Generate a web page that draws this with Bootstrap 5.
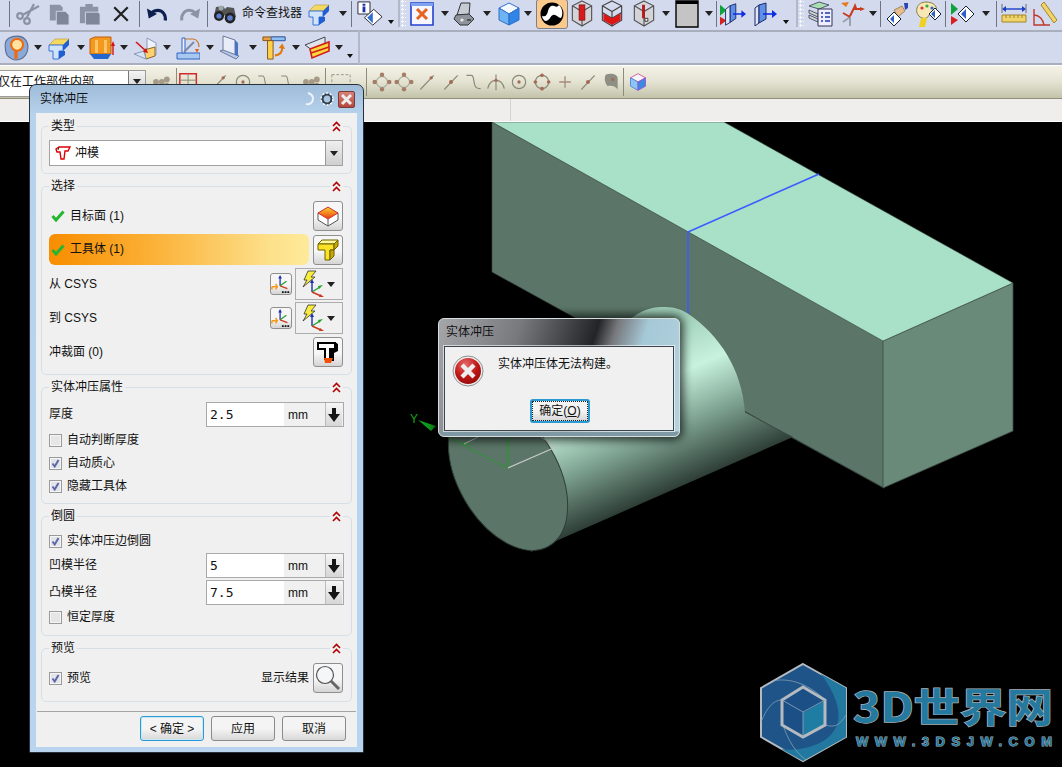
<!DOCTYPE html>
<html lang="zh-CN">
<head>
    <meta charset="UTF-8">
    <meta name="viewport" content="width=device-width, initial-scale=1.0">
    <title>实体冲压</title>
    <link href="https://cdn.jsdelivr.net/npm/bootstrap@5.3.0/dist/css/bootstrap.min.css" rel="stylesheet">
    <style>
        html, body { margin: 0; background: #000; overflow: hidden; }
        body { font-family: "Liberation Sans", "Noto Sans CJK SC", sans-serif; font-size: 12px; color: #111; line-height: 1.2; }
        .nx-app { width: 1062px; height: 767px; }
        .nx-bar { background: #d3daed; border-bottom: 2px solid #a9aebd; flex: none; }
        .nx-bar1 { height: 32px; padding-bottom: 3px; }
        .nx-bar2 { height: 33px; padding-left: 1px; padding-bottom: 2px; }
        .nx-bar3 { height: 34px; background: linear-gradient(#f4f2e6, #e4e3d2 50%, #c3c3ab); border-bottom: 1px solid #8f8f7c; border-top: 1px solid #fff; flex: none; }
        .nx-bar4 { height: 23px; background: #f0eeec; border-bottom: 1px solid #fff; flex: none; }
        .nx-tb1 { width: 400px; border-right: 2px solid #b3b8c6; }
        .nx-tb2 { width: 398px; border-right: 2px solid #b3b8c6; }
        .nx-tb4 { width: 359px; border-right: 2px solid #b3b8c6; height: 33px; margin-bottom: -2px; }
        .nx-cell { flex: none; display: flex; align-items: center; justify-content: center; height: 100%; }
        .nx-cell svg { flex: none; }
        .w6 { width: 6px; } .w10 { width: 10px; } .w12 { width: 12px; } .w13 { width: 13px; } .w14 { width: 14px; } .w16 { width: 16px; }
        .w20 { width: 20px; } .w22 { width: 22px; } .w24 { width: 24px; } .w26 { width: 26px; } .w28 { width: 28px; } .w30 { width: 30px; }
        .w32 { width: 32px; } .w34 { width: 34px; } .w36 { width: 36px; }
        .nx-ml1 { margin-left: 1px; } .nx-ml2 { margin-left: 2px; } .nx-mr3 { margin-right: 3px; }
        .nx-caret { width: 0; height: 0; border: 4.5px solid transparent; border-top: 5px solid #222; border-bottom: 0; }
        .nx-caret-sm { width: 0; height: 0; border: 3.5px solid transparent; border-top: 4px solid #111; border-bottom: 0; margin-top: 16px; }
        .nx-sep { width: 1px; height: 26px; background: #6f7480; flex: none; }
        .nx-sep-b { width: 1px; height: 28px; background: #8c8c7a; flex: none; }
        .nx-grip { width: 6px; height: 100%; flex: none; background: radial-gradient(circle at 1.5px 1.5px, #f7f8fc 1px, transparent 1.4px) 1px 0 / 4px 4px; }
        .nx-on { width: 32px; height: 30px; background: #fbc98c; border: 1px solid #7d8088; border-radius: 3px; display: flex; align-items: center; justify-content: center; }
        .nx-find { width: 60px; flex: none; white-space: nowrap; }
        .nx-combo { width: 146px; height: 27px; margin-top: 4px; background: #fff; border: 1px solid #9b9b9b; border-left: 0; flex: none; overflow: hidden; font-size: 12px; }
        .nx-combo-t { margin-left: -2px; padding-top: 4px; white-space: nowrap; flex: 1; overflow: hidden; }
        .nx-combo-b { width: 17px; height: 100%; padding-top: 8px; border-left: 1px solid #777; background: linear-gradient(#f4f4f4, #c8c8c8); }
        .nx-rule { width: 1px; height: 100%; background: #d4d2d0; margin-left: 510px; }
        .nx-view { flex: 1; background: #000; }
        .nx-view svg { display: block; }

        .nx-win { left: 29px; top: 84px; width: 335px; height: 669px; background: linear-gradient(#9fbcd9, #b7d2ec 30px, #b9d4ee); border: 1px solid #26303a; border-radius: 7px 7px 1px 1px; padding: 0 6px 5px; }
        .nx-win-t { height: 28px; padding: 0 2px 0 4px; font-size: 12px; }
        .nx-x { width: 17px; height: 17px; background: linear-gradient(#d98278, #b5483f); border: 1px solid #7a3a36; border-radius: 2px; margin-left: 3px; }
        .nx-panel { background: #f0f0f0; height: 634px; padding: 13px 5px 0; }
        .nx-grp { border: 1px solid #d6dfe6; border-radius: 5px; padding: 0 8px 0 7px; }
        .nx-grp + .nx-grp { margin-top: 12px; }
        .nx-g-h { height: 17px; margin-top: -9px; padding-bottom: 1px; }
        .nx-g-l { background: #f0f0f0; padding: 0 2px; }
        .nx-g-c { background: #f0f0f0; padding: 0 2px; display: flex; }
        .nx-sel { height: 26px; background: #fff; border: 1px solid #a2a2a2; padding-left: 5px; margin-top: 5px; margin-bottom: 7px; }
        .nx-sel-b { width: 17px; height: 100%; border-left: 1px solid #999; background: linear-gradient(#efefef, #cfcfcf); margin-left: auto; }
        .nx-row { display: flex; align-items: center; }
        .nx-pt6 { margin-top: 6px; }
        .nx-h30 { height: 30px; }
        .nx-h31 { height: 31px; margin-top: 3px; }
        .nx-h32 { height: 32px; margin-top: 3px; }
        .nx-h32b { height: 32px; margin-top: 2px; }
        .nx-h30b { height: 30px; margin-top: 3px; margin-bottom: 7px; }
        .nx-fill { flex: 1; padding-left: 2px; gap: 5px; height: 100%; }
        .nx-hot { background: linear-gradient(90deg, #f88d00, #fbb137 40%, #fde08b 85%, #feea99); border-radius: 6px; margin-right: 4px; }
        .nx-ibtn { width: 30px; height: 30px; flex: none; background: linear-gradient(#f6f6f6 55%, #d4d4d4); border: 1px solid #8f8f8f; border-radius: 3px; display: flex; align-items: center; justify-content: center; padding: 0; }
        .nx-sbtn { width: 22px; height: 22px; margin-right: 3px; flex: none; background: linear-gradient(#f6f6f6 55%, #d4d4d4); border: 1px solid #8f8f8f; border-radius: 3px; display: flex; align-items: center; justify-content: center; }
        .nx-ddn { width: 48px; height: 32px; flex: none; background: #f0f0f0; border: 1px solid #acacac; padding-left: 3px; padding-right: 7px; justify-content: space-between; }
        .nx-inp.input-group { width: 138px; height: 25px; flex: none; flex-wrap: nowrap; margin-left: auto; margin-right: -1px; border: 1px solid #a9a9a9; }
        .nx-inp .form-control { flex: none; width: 77px; padding: 0 0 0 3px; border: 0; border-radius: 0; font: 13px/23px "DejaVu Sans Mono", "Liberation Mono", monospace; color: #111; background: #fff; }
        .nx-inp .input-group-text { flex: none; width: 42px; padding: 0 0 0 4px; margin: 0 !important; border: 0; border-radius: 0; background: #f0f0f0; font-size: 12px; color: #111; }
        .nx-inp .nx-spin { width: 17px; border-left: 1px solid #bbb; background: linear-gradient(#f6f6f6, #d6d6d6); }
        .nx-chk { height: 23px; gap: 5px; }
        .nx-chk .form-check-input { width: 13px; height: 13px; margin: 0; flex: none; border: 1px solid #9a9a9a; border-radius: 0; background-color: #e6e6e6; box-shadow: inset 0 0 0 1px #f5f5f5; }
        .nx-chk .form-check-input:checked { background-color: #e3e4ea; border-color: #9a9a9a; background-image: url("data:image/svg+xml,%3csvg xmlns='http://www.w3.org/2000/svg' viewBox='0 0 13 13'%3e%3cpath fill='none' stroke='%235d68a8' stroke-width='2' d='M3.5 6.5l2.2 3L9.5 3'/%3e%3c/svg%3e"); background-size: 13px 13px; }
        .nx-mt1 { margin-top: 1px; } .nx-mt2 { margin-top: 2px; }
        .nx-pb5 { margin-bottom: 5px; } .nx-pb6 { margin-bottom: 6px; } .nx-pt5 { margin-top: 5px; }
        .nx-pt8 { margin-bottom: 8px; }
        .nx-foot { margin: 9px -4px 0 -4px; border-top: 1px solid #a5a5a5; padding: 4px 10px 0 0; gap: 7px; }
        .nx-btn.btn { width: 64px; height: 25px; padding: 0; font-size: 12px; line-height: 1; color: #111; background: linear-gradient(#f4f4f4 50%, #d8d8d8); border: 1px solid #8a8a8a; border-radius: 3px; }
        .nx-btn.nx-def { border-color: #2a9ad2; box-shadow: inset 0 0 0 1px #c9e9f8; }

        .nx-msg { left: 438px; top: 318px; width: 242px; height: 119px; padding: 27px 5px 5px; border: 1px solid #d8dde0; border-radius: 6px;
            background: linear-gradient(#0000 22px, #0000 112px, #7f99a4 113px), linear-gradient(108deg, #a5a6aa 0, #77797d 30%, #232428 58%, #77797d 65%, #a6c9d7 76%, #b3d3df 100%);
            box-shadow: 0 0 10px 3px rgba(0, 0, 0, .75); }
        .nx-msg-t { position: absolute; left: 7px; top: 6px; font-size: 12px; }
        .nx-msg-b { height: 85px; background: #f0f0f0; border: 1px solid #39444c; box-shadow: 0 0 0 1px rgba(255,255,255,.6); padding: 8px 8px 0 7px; }
        .nx-msg-s { gap: 14px; height: 44px; }
        .nx-msg-s span { margin-top: 2px; }
        .nx-msg .btn { width: 60px; height: 24px; margin-left: 78px; padding: 0; font-size: 12px; color: #111; background: linear-gradient(#f4f4f4 50%, #d6d6d6); border: 2px solid #2a9ad2; border-radius: 3px; outline: 1px dotted #222; outline-offset: -3px; }
        .nx-logo1 { font-family: "Noto Sans CJK SC", "Liberation Sans", sans-serif; font-weight: 700; font-size: 40px; fill: #25799f; stroke: #aab2b6; stroke-width: 1.4; paint-order: stroke; }
        .nx-logo2 { font-family: "Liberation Sans", sans-serif; font-weight: 700; font-size: 13px; fill: #25799f; stroke: #aab2b6; stroke-width: 1; paint-order: stroke; }
    </style>
</head>
<body>
    <svg width="0" height="0" class="position-absolute">
        <defs>
            <linearGradient id="cylShade" gradientUnits="userSpaceOnUse" x1="650" y1="330" x2="718" y2="486">
                <stop offset="0" stop-color="#9fcfb8"/><stop offset=".3" stop-color="#c8f2de"/><stop offset=".6" stop-color="#7b9f8e"/><stop offset=".92" stop-color="#2c3c34"/>
            </linearGradient>
            <radialGradient id="errRed" cx=".4" cy=".25" r=".85"><stop offset="0" stop-color="#e66a6a"/><stop offset=".55" stop-color="#c01616"/><stop offset="1" stop-color="#8c0a0a"/></radialGradient>
            <linearGradient id="orgTop" x1="0" y1="0" x2="0" y2="1"><stop offset="0" stop-color="#f8d530"/><stop offset="1" stop-color="#ee3a10"/></linearGradient>

            <symbol id="scissors" viewBox="0 0 24 24"><g fill="none" stroke="#8b92a4" stroke-width="2.2"><circle cx="4" cy="14" r="2.8"/><circle cx="11" cy="19" r="2.8"/><path d="M6.5 13 23 4M10.5 16 18 2"/></g></symbol>
            <symbol id="copy" viewBox="0 0 24 24"><path fill="#8c93a6" d="M2 2h11l3 3v14H2z"/><path fill="#7f8699" stroke="#d3daed" d="M9 9h10l4 4v11H9z"/></symbol>
            <symbol id="paste" viewBox="0 0 24 24"><path fill="#8c93a6" d="M1 4h6V1h8v3h6v18H1z"/><path fill="#7f8699" stroke="#d3daed" d="M7 10h14l2 2v12H7z"/></symbol>
            <symbol id="cross" viewBox="0 0 24 24"><path stroke="#222" stroke-width="3" d="M3 3 21 21M21 3 3 21"/></symbol>
            <symbol id="undo" viewBox="0 0 24 24"><path fill="none" stroke="#0d1f4f" stroke-width="3.4" d="M21 19c1-6-3-11-8-11-3 0-5 1-7 3"/><path fill="#0d1f4f" d="M1 6l2 11 9-5z"/></symbol>
            <symbol id="redo" viewBox="0 0 24 24"><path fill="none" stroke="#8c93a6" stroke-width="3.2" d="M3 19c-1-6 3-11 8-11 3 0 5 1 7 3"/><path fill="#8c93a6" d="M23 6l-2 11-9-5z"/></symbol>
            <symbol id="binoc" viewBox="0 0 24 24"><path fill="#555" d="M3 5l7-1 2 3 2-2 7 1 2 9-8 2-3-4-4 4-7-3z"/><circle cx="6" cy="14" r="5" fill="#222"/><circle cx="6" cy="14" r="2.6" fill="#5c7ed0"/><circle cx="17" cy="16" r="5.4" fill="#222"/><circle cx="17" cy="16" r="2.8" fill="#5c7ed0"/><circle cx="8" cy="6" r="2.5" fill="#9aa"/></symbol>
            <symbol id="tee" viewBox="0 0 24 24"><path fill="#f5d860" stroke="#b89a30" stroke-width=".6" d="M2 9l6-6h14l-6 6z"/><path fill="#cfe3fb" stroke="#3a73d6" d="M2 9h14v6h-4v8H6v-8H2z"/><path fill="#1f5fd0" d="M16 9l6-6v6l-6 6zM12 15h6v4l-6 4z"/></symbol>
            <symbol id="info" viewBox="0 0 28 28"><path fill="#fff" stroke="#223" d="M1 1h13v13H1z"/><path fill="#1a2ea8" d="M6 3h3v2H6zM6 6h3v6H6z"/><path fill="#fff" stroke="#223" d="M8 18 18 9l9 8-10 9z"/><path fill="#2f6ed2" d="M11 18l6-6v12z"/></symbol>
            <symbol id="framex" viewBox="0 0 24 24"><path fill="#f6f6ff" stroke="#2441d0" stroke-width="1.6" d="M1 1h22v22H1z"/><path fill="#7ea2ee" d="M1 1h22v3H1z"/><path stroke="#e8631c" stroke-width="3" d="M7 7l10 10M17 7 7 17"/></symbol>
            <symbol id="printer" viewBox="0 0 24 24"><path fill="#c7cbd4" stroke="#333" d="M9 1h9l-1 12H5z"/><path fill="#8f939c" stroke="#333" d="M4 13l13-1 5 5-6 6H8l-6-6z"/><circle cx="10" cy="18" r="1.6" fill="#eee"/><path stroke="#111" d="M15 18h4"/></symbol>
            <symbol id="cube" viewBox="0 0 24 24"><path fill="#f4f8ff" stroke="#2d6fca" d="M12 1l10 5-10 6L2 6z"/><path fill="#6eb4f2" stroke="#2d6fca" d="M2 6l10 6v11L2 18z"/><path fill="#2f86e6" stroke="#2d6fca" d="M22 6l-10 6v11l10-5z"/></symbol>
            <symbol id="yin" viewBox="0 0 24 24"><circle cx="12" cy="12" r="11.5" fill="#000"/><path fill="#fff" d="M19 3c4 4 4 10 2 13-3 0-5-4-8-3s-3 6-8 6c-1-1-3-3-3-5 4 1 5-1 6-5s3-6 6-5 3 1 4 0c1-1 1-1 1-1z"/></symbol>
            <symbol id="wire" viewBox="0 0 24 28"><path fill="#d3d3d8" stroke="#555" stroke-width="1.2" d="M12 1l10 5v15l-10 6-10-6V6zM2 6l10 6 10-6M12 12v15"/></symbol>
            <symbol id="box1" viewBox="0 0 24 28"><use href="#wire"/><path fill="#d81c1c" stroke="#600" stroke-width=".6" d="M9 5h6v16H9z"/></symbol>
            <symbol id="box2" viewBox="0 0 24 28"><path fill="#dde" fill-opacity=".4" stroke="#444" stroke-width="1.2" d="M12 1l10 5v15l-10 6-10-6V6zM2 6l10 6 10-6M12 12v15M2 13l10 6 10-6"/><path fill="#dd1616" d="M3 14l9 5 9-5 0 7-9 5-9-5z"/></symbol>
            <symbol id="box3" viewBox="0 0 24 28"><use href="#wire"/><path fill="#b81818" d="M10 5h3v14h-3z"/><path fill="#fff" stroke="#333" d="M13 19h3v3h-3z"/></symbol>
            <symbol id="sq" viewBox="0 0 24 28"><path fill="#c4c4c4" stroke="#000" stroke-width="1.4" d="M1 1h22v26H1z"/><path fill="#000" d="M1 1h22v3H1z"/></symbol>
            <symbol id="flowa" viewBox="0 0 28 24"><path fill="#0da33c" d="M0 2l7 6-7 6z"/><path fill="#d72020" d="M0 15l7 4-7 5z"/><path fill="#dfe7fb" stroke="#1c2a66" d="M6 7l5-4v18l-5 3z"/><path fill="#5f8fe8" stroke="#1c2a66" d="M11 3l6-2v16l-6 4z"/><path stroke="#0b2ee0" stroke-width="1.6" d="M14 12h10"/><path fill="#0b2ee0" d="M23 8l5 4-5 4z"/></symbol>
            <symbol id="flowb" viewBox="0 0 24 24"><path fill="#dfe7fb" stroke="#1c2a66" d="M1 6l4-3v18l-4 3z"/><path fill="#5f8fe8" stroke="#1c2a66" d="M5 3l7-2v16l-7 4z"/><path stroke="#0b2ee0" stroke-width="1.6" d="M9 12h10"/><path fill="#0b2ee0" d="M18 8l5 4-5 4z"/></symbol>
            <symbol id="layers" viewBox="0 0 26 26"><path fill="#a8e0b0" stroke="#557" d="M1 5l10-4 10 3-10 4z"/><path fill="#cfd8c8" stroke="#557" d="M1 9l9 4v3l-9-4zM1 14l9 4v3l-9-4z"/><path fill="#eef" stroke="#335" d="M10 8h14v17H10z"/><path stroke="#1a3caa" stroke-width="1.4" d="M13 12h2m2 0h5M13 16h2m2 0h5M13 20h2m2 0h5"/></symbol>
            <symbol id="axes" viewBox="0 0 26 26"><path stroke="#9ba0aa" stroke-width="2" fill="none" d="M11 16v9M11 16l-7 5"/><path stroke="#c93a1e" stroke-width="2" fill="none" d="M11 15 15 7M14 8h10M11 16 4 12"/><path fill="#e8781e" d="M2 2l8-1-3 5z"/><path fill="#c93a1e" d="M16 2l2 5-4 0zM21 6l5 2-5 2z"/></symbol>
            <symbol id="hand" viewBox="0 0 24 24"><path fill="#e8bd8c" stroke="#7a5a30" stroke-width=".6" d="M8 8l8-4 3 5-7 6z"/><path fill="#2a46b0" d="M18 1h4v5l-3 2z"/><path fill="#fff" stroke="#123" d="M1 17l7-7 7 7-7 7z"/><path fill="#2e60c8" d="M4 17l4-4v8z"/></symbol>
            <symbol id="palette" viewBox="0 0 26 26"><path fill="#f6e7b6" stroke="#8d7a3c" d="M11 1c7 0 12 4 10 9-2 4-6 2-7 4-1 3-4 4-7 3C2 15 1 10 2 7c1-4 5-6 9-6z"/><circle cx="7" cy="7" r="1.6" fill="#d33"/><circle cx="12" cy="5" r="1.6" fill="#3a3"/><circle cx="17" cy="7" r="1.6" fill="#36c"/><path fill="#f0d020" d="M6 17h6l-2 9H4z"/><path fill="#fff" stroke="#123" d="M14 13l6-6 6 6-6 6z"/><path fill="#2e60c8" d="M16 13l4-4v8z"/></symbol>
            <symbol id="flowd" viewBox="0 0 26 24"><path fill="#0da33c" d="M1 1l7 6-7 6z"/><path fill="#d72020" d="M1 14l7 4-7 5z"/><path fill="#fff" stroke="#123" d="M8 12l8-8 8 8-8 8z"/><path fill="#2e60c8" d="M11 12l5-5v10z"/></symbol>
            <symbol id="ruler" viewBox="0 0 26 24"><path stroke="#1a3ec8" stroke-width="1.4" d="M3 7h20"/><path fill="#1a3ec8" d="M1 7l4-3v6zM25 7l-4-3v6z"/><path stroke="#667" d="M1 2v9M25 2v9"/><path fill="#f0d46a" stroke="#a3852a" d="M1 13h24v7H1z"/><path stroke="#a3852a" d="M5 13v3M9 13v3M13 13v3M17 13v3M21 13v3"/></symbol>
            <symbol id="protr" viewBox="0 0 26 26"><path fill="none" stroke="#c0392b" stroke-width="1.4" d="M2 8v16h16M2 14c5 0 9 4 10 10"/><path fill="#f0d46a" stroke="#a3852a" d="M9 4l3-3 13 18-3 3z"/></symbol>

            <symbol id="gasket" viewBox="0 0 24 24"><path fill="#89a9d8" stroke="#5c6d90" d="M2 9c0-6 6-8 11-8 6 0 10 4 10 10 0 7-5 12-11 12-3 0-5-1-8-4-2-3-2-6-2-10z"/><circle cx="13" cy="9" r="5.5" fill="#ffe2a0" stroke="#ef6a10" stroke-width="2"/><path stroke="#ef6a10" stroke-width="3" d="M12 14v8"/></symbol>
            <symbol id="prism" viewBox="0 0 26 24"><path fill="#f39a1c" stroke="#c25a10" d="M1 3l5-2h16v17H1z"/><path fill="#ffc46a" d="M6 4h3v13H6zM15 4h3v13h-3z"/><path fill="#2468cf" d="M1 18h21l-3 5H5z"/><path stroke="#d41414" stroke-width="1.4" d="M24 19V9"/><path fill="#d41414" d="M24 5l2 5h-4z"/></symbol>
            <symbol id="cone" viewBox="0 0 24 24"><path fill="#eef3fb" stroke="#8899bb" d="M14 2l9 5v12l-9 3z"/><path fill="#ffcf70" stroke="#8a6a20" d="M11 14l11-3 0 9-9 3z"/><path fill="#d6e4f6" stroke="#8899bb" d="M1 18l10-3 2 8z"/><path stroke="#d01515" stroke-width="1.6" d="M3 6l10 9"/><path fill="#d01515" d="M15 17l-5-1 3-4z"/></symbol>
            <symbol id="weld" viewBox="0 0 24 24"><path fill="#a9c8ef" stroke="#2f64c4" d="M1 17h23v6H1z"/><path fill="#eef" stroke="#2f64c4" d="M9 2v15H6V2z"/><path fill="none" stroke="#c2762a" stroke-width="1.2" d="M9 3h8c4 0 6 4 6 8"/><path stroke="#7a8aa8" stroke-width="2" d="M8 16 18 6"/><path fill="#e5621a" d="M19 13h4l-2 4z"/></symbol>
            <symbol id="sheet" viewBox="0 0 24 26"><path fill="#e8edf7" stroke="#6a7a9a" d="M4 1l12 4v15l-12-4z"/><path fill="#b8c8e8" stroke="#6a7a9a" d="M1 16l3-1 16 6-3 3z"/><path fill="#4a74c4" d="M16 5l3 3v13l-3-1z"/></symbol>
            <symbol id="teearrow" viewBox="0 0 26 26"><path fill="#e9a23a" stroke="#805018" d="M1 1h24v4H1z"/><path fill="#8fc0ee" stroke="#2a62c2" d="M10 1h15v4H10z"/><path fill="#ffd24a" stroke="#805018" d="M6 5h6v20H6z"/><path fill="none" stroke="#e07a10" stroke-width="2.2" d="M14 21c5 0 8-3 8-9"/><path fill="#e07a10" d="M18 13l4-5 3 6z"/></symbol>
            <symbol id="stripe" viewBox="0 0 26 24"><path fill="#dfe3ea" stroke="#445" d="M1 9l20-8v7L8 14z"/><path fill="#f7d83c" stroke="#d51c1c" stroke-width="1.6" d="M6 13l19-7v9L8 22z"/><path stroke="#d51c1c" stroke-width="1.6" d="M7 17l18-6"/></symbol>

            <symbol id="redbox" viewBox="0 0 24 24"><path fill="none" stroke="#d52828" stroke-width="1.6" d="M2 3h18v14H2z"/><path stroke="#886" d="M11 3v14M2 10h18"/></symbol>
            <symbol id="dots" viewBox="0 0 24 24"><g fill="#a59a86"><circle cx="6" cy="12" r="3.5"/><circle cx="13" cy="12" r="3.5"/><circle cx="19" cy="9" r="3.5"/><circle cx="19" cy="16" r="3"/></g></symbol>
            <symbol id="dash" viewBox="0 0 24 24"><path fill="none" stroke="#9a8f80" stroke-dasharray="3 2" d="M2 4h20v14H2z"/></symbol>
            <symbol id="snap" viewBox="0 0 24 24"><circle cx="12" cy="12" r="6" fill="none" stroke="#8b9180"/><g fill="#a57c66"><circle cx="12" cy="4" r="2.4"/><circle cx="12" cy="20" r="2.4"/><circle cx="4" cy="12" r="2.4"/><circle cx="20" cy="12" r="2.4"/></g></symbol>
            <symbol id="line" viewBox="0 0 24 24"><path stroke="#8b8a78" stroke-width="1.4" d="M4 21 20 4"/><circle cx="17" cy="7" r="2" fill="#a46a55"/></symbol>
            <symbol id="mid" viewBox="0 0 24 24"><path stroke="#8b8a78" stroke-width="1.4" d="M4 21 20 4"/><circle cx="12" cy="12" r="2.4" fill="#a46a55"/></symbol>
            <symbol id="curve" viewBox="0 0 24 24"><path fill="none" stroke="#8b8a78" stroke-width="1.4" d="M3 4h6c3 0 2 6 4 12 1 3 3 4 7 4"/></symbol>
            <symbol id="cross3" viewBox="0 0 24 24"><path fill="none" stroke="#8b8a78" stroke-width="1.4" d="M12 3v19M2 20c2-9 7-10 10-10s8 1 10 10"/><circle cx="12" cy="10" r="2" fill="#a46a55"/></symbol>
            <symbol id="ring" viewBox="0 0 24 24"><circle cx="12" cy="12" r="8" fill="none" stroke="#8b8a78" stroke-width="1.4"/><circle cx="12" cy="12" r="2" fill="#a46a55"/></symbol>
            <symbol id="ring4" viewBox="0 0 24 24"><circle cx="12" cy="12" r="8" fill="none" stroke="#8b8a78" stroke-width="1.4"/><g fill="#a46a55"><circle cx="12" cy="4" r="2.2"/><circle cx="12" cy="20" r="2.2"/><circle cx="4" cy="12" r="2.2"/><circle cx="20" cy="12" r="2.2"/></g></symbol>
            <symbol id="plus" viewBox="0 0 24 24"><path stroke="#a68c7c" stroke-width="1.6" d="M12 5v14M5 12h14"/></symbol>
            <symbol id="face" viewBox="0 0 24 24"><path fill="#8d8f84" d="M6 3c7-2 13 0 14 4v14c-3-4-8-5-12-4-3-3-5-10-2-14z"/><circle cx="14" cy="9" r="2" fill="#a46a55"/></symbol>
            <symbol id="cubeb" viewBox="0 0 24 24"><path fill="#f4f4fb" stroke="#d64b8e" d="M12 2l9 5-9 5-9-5z"/><path fill="#8ec4f5" stroke="#4b80d6" d="M3 7l9 5v10l-9-5z"/><path fill="#3b8ae0" stroke="#a04bd6" d="M21 7l-9 5v10l9-5z"/></symbol>

            <symbol id="chev" viewBox="0 0 9 11"><path fill="none" stroke="#b30000" stroke-width="1.6" d="M1 5l3.5-3.5L8 5M1 10l3.5-3.5L8 10"/></symbol>
            <symbol id="ok" viewBox="0 0 14 12"><path fill="none" stroke="#25b52f" stroke-width="3" d="M1.5 6l3.5 4L12.5 1.5"/></symbol>
            <symbol id="punchr" viewBox="0 0 16 14"><path fill="#fff" stroke="#d00" stroke-width="1.4" d="M1 3l3-2h11l-2 4h-3l-1 8H6L5 6H2z"/><path stroke="#333" d="M4 1l-1 3"/></symbol>
            <symbol id="facebox" viewBox="0 0 22 22"><path fill="#fff" stroke="#555" d="M1 8v7l10 6 10-6V8z"/><path stroke="#555" d="M11 14v7"/><path fill="url(#orgTop)" stroke="#c33" d="M11 2l10 6-10 6L1 8z"/></symbol>
            <symbol id="teey" viewBox="0 0 22 24"><path fill="#fff79a" stroke="#6d6100" d="M1 6l4-4h16l-4 4z"/><path fill="#fbe227" stroke="#6d6100" d="M1 6h16v6h-4v10H8V12H1z"/><path fill="#c7a700" stroke="#6d6100" d="M17 6l4-4v6l-4 4zM13 12h4l-0 6-4 4z"/></symbol>
            <symbol id="csyss" viewBox="0 0 22 22"><path stroke="#1b2fa8" stroke-width="1.4" d="M10 13V3"/><path fill="#1b2fa8" d="M10 1l2 4H8z"/><path stroke="#23a12c" stroke-width="1.4" d="M10 13l7-5"/><path stroke="#c93a1e" stroke-width="1.4" d="M10 13l8 3"/><path fill="none" stroke="#f39a1c" stroke-width="1.6" d="M1 14h5M5 11l2 3-2 3M1 14v3"/><path stroke="#111" stroke-width="2" stroke-dasharray="2 1" d="M12 20h9"/></symbol>
            <symbol id="csysl" viewBox="0 0 26 28"><path fill="#f8ec3c" stroke="#333" stroke-width=".8" d="M9 1h8l-5 6h4L4 17l4-7H5z"/><path stroke="#1b2fa8" stroke-width="1.4" d="M13 22V11"/><path fill="#1b2fa8" d="M13 9l2 4h-4z"/><path stroke="#23a12c" stroke-width="1.4" d="M13 22l8-5"/><path fill="#23a12c" d="M24 15l-4 4-1-3z"/><path stroke="#c93a1e" stroke-width="1.4" d="M13 22l9 4"/><path fill="#c93a1e" d="M25 27l-5 0 1-3z"/></symbol>
            <symbol id="teeb" viewBox="0 0 22 24"><path fill="#fff" stroke="#000" stroke-width="2" d="M1 3h17v6h-5v10H8V9H1z"/><path fill="#000" d="M18 2l3 2v7l-4 2V9zM13 9h4v12l-4 0z"/><path fill="#f0500a" d="M7 18h9l-2 5H8z"/></symbol>
            <symbol id="lens" viewBox="0 0 26 26"><circle cx="10" cy="10" r="8.5" fill="#f4f6f8" stroke="#555" stroke-width="1.2"/><path stroke="#666" stroke-width="3" d="M16 16l8 8"/></symbol>
            <symbol id="spin" viewBox="0 0 12 14"><path fill="#151515" d="M4 0h4v6h4l-6 8-6-8h4z"/></symbol>
            <symbol id="err" viewBox="0 0 32 32"><circle cx="16" cy="16" r="15" fill="#eee" stroke="#8e8e8e"/><circle cx="16" cy="16" r="13" fill="url(#errRed)"/><path stroke="#eee" stroke-width="4.4" d="M10 10l12 12M22 10 10 22"/></symbol>
            <symbol id="refresh" viewBox="0 0 16 16"><path fill="none" stroke="#eef4fb" stroke-width="2" d="M9 2c4 1 5 4 5 6 0 4-4 6-7 5"/></symbol>
            <symbol id="gear" viewBox="0 0 16 16"><circle cx="8" cy="8" r="4.6" fill="none" stroke="#33414f" stroke-width="2.4"/><circle cx="8" cy="8" r="6" fill="none" stroke="#fff" stroke-width="1.4" stroke-dasharray="2 1.8"/></symbol>
            <symbol id="close" viewBox="0 0 15 15"><path stroke="#eee" stroke-width="3" d="M3 3l9 9M12 3l-9 9"/></symbol>
        </defs>
    </svg>

    <div class="nx-app d-flex flex-column position-relative">
        <!-- standard toolbars -->
        <div class="nx-bar nx-bar1 d-flex align-items-center">
            <div class="nx-tb1 d-flex align-items-center h-100">
                <div class="w10 d-flex justify-content-end nx-mr3"><span class="nx-sep"></span></div>
                <div class="nx-cell w30"><svg width="24" height="24"><use href="#scissors"/></svg></div>
                <div class="nx-cell w32"><svg width="22" height="22"><use href="#copy"/></svg></div>
                <div class="nx-cell w30"><svg width="22" height="22"><use href="#paste"/></svg></div>
                <div class="nx-cell w32"><svg width="18" height="18"><use href="#cross"/></svg></div>
                <span class="nx-sep nx-ml2"></span>
                <div class="nx-cell w34"><svg width="22" height="22"><use href="#undo"/></svg></div>
                <div class="nx-cell w32"><svg width="22" height="22"><use href="#redo"/></svg></div>
                <span class="nx-sep nx-ml1"></span>
                <div class="nx-cell w34"><svg width="24" height="24"><use href="#binoc"/></svg></div>
                <div class="nx-find">命令查找器</div>
                <div class="nx-cell w34"><svg width="24" height="24"><use href="#tee"/></svg></div>
                <div class="nx-cell w14"><span class="nx-caret"></span></div>
                <span class="nx-sep nx-ml1"></span>
                <div class="nx-cell w36"><svg width="26" height="26"><use href="#info"/></svg></div>
                <div class="nx-cell w6"><span class="nx-caret-sm"></span></div>
            </div>
            <div class="nx-tb2 d-flex align-items-center h-100">
                <div class="nx-grip"></div>
                <div class="nx-cell w32"><svg width="24" height="24"><use href="#framex"/></svg></div>
                <div class="nx-cell w14"><span class="nx-caret"></span></div>
                <div class="nx-cell w24"><svg width="24" height="24"><use href="#printer"/></svg></div>
                <div class="nx-cell w22"><span class="nx-caret"></span></div>
                <div class="nx-cell w22"><svg width="24" height="24"><use href="#cube"/></svg></div>
                <div class="nx-cell w16"><span class="nx-caret"></span></div>
                <div class="nx-on"><svg width="24" height="24"><use href="#yin"/></svg></div>
                <div class="nx-cell w28"><svg width="24" height="27"><use href="#box1"/></svg></div>
                <div class="nx-cell w32"><svg width="24" height="27"><use href="#box2"/></svg></div>
                <div class="nx-cell w32"><svg width="24" height="27"><use href="#box3"/></svg></div>
                <div class="nx-cell w12"><span class="nx-caret"></span></div>
                <div class="nx-cell w30"><svg width="24" height="28"><use href="#sq"/></svg></div>
                <div class="nx-cell w14"><span class="nx-caret"></span></div>
                <span class="nx-sep ms-0"></span>
                <div class="nx-cell w32"><svg width="26" height="24"><use href="#flowa"/></svg></div>
                <div class="nx-cell w34"><svg width="24" height="24"><use href="#flowb"/></svg></div>
                <div class="nx-cell w6"><span class="nx-caret-sm"></span></div>
            </div>
            <div class="d-flex align-items-center h-100 flex-grow-1">
                <div class="nx-grip"></div>
                <div class="nx-cell w34"><svg width="26" height="26"><use href="#layers"/></svg></div>
                <div class="nx-cell w28"><svg width="26" height="26"><use href="#axes"/></svg></div>
                <div class="nx-cell w14"><span class="nx-caret"></span></div>
                <span class="nx-sep"></span>
                <div class="nx-cell w34"><svg width="24" height="24"><use href="#hand"/></svg></div>
                <div class="nx-cell w26"><svg width="26" height="26"><use href="#palette"/></svg></div>
                <span class="nx-sep ms-1"></span>
                <div class="nx-cell w34"><svg width="26" height="24"><use href="#flowd"/></svg></div>
                <div class="nx-cell w12"><span class="nx-caret"></span></div>
                <span class="nx-sep ms-1"></span>
                <div class="nx-cell w34"><svg width="26" height="24"><use href="#ruler"/></svg></div>
                <div class="nx-cell w28"><svg width="26" height="26"><use href="#protr"/></svg></div>
            </div>
        </div>

        <div class="nx-bar nx-bar2 d-flex align-items-center">
            <div class="nx-tb4 d-flex align-items-center">
                <div class="nx-cell w30"><svg width="26" height="26"><use href="#gasket"/></svg></div><div class="nx-cell w13"><span class="nx-caret"></span></div>
                <div class="nx-cell w30"><svg width="24" height="24"><use href="#tee"/></svg></div><div class="nx-cell w13"><span class="nx-caret"></span></div>
                <div class="nx-cell w30"><svg width="26" height="24"><use href="#prism"/></svg></div><div class="nx-cell w13"><span class="nx-caret"></span></div>
                <div class="nx-cell w30"><svg width="24" height="24"><use href="#cone"/></svg></div><div class="nx-cell w13"><span class="nx-caret"></span></div>
                <div class="nx-cell w30"><svg width="24" height="24"><use href="#weld"/></svg></div><div class="nx-cell w13"><span class="nx-caret"></span></div>
                <div class="nx-cell w30"><svg width="24" height="26"><use href="#sheet"/></svg></div><div class="nx-cell w13"><span class="nx-caret"></span></div>
                <div class="nx-cell w30"><svg width="24" height="24"><use href="#teearrow"/></svg></div><div class="nx-cell w13"><span class="nx-caret"></span></div>
                <div class="nx-cell w30"><svg width="26" height="24"><use href="#stripe"/></svg></div><div class="nx-cell w13"><span class="nx-caret"></span></div>
                <div class="nx-cell w10"><span class="nx-caret-sm"></span></div>
            </div>
        </div>

        <!-- selection bar -->
        <div class="nx-bar3 d-flex align-items-center">
            <div class="nx-combo d-flex align-self-start align-items-start">
                <div class="nx-combo-t">仅在工作部件内部</div>
                <div class="nx-combo-b d-flex align-items-start justify-content-center"><span class="nx-caret"></span></div>
            </div>
            <div class="nx-cell w30"><svg width="20" height="20"><use href="#dots"/></svg></div>
            <span class="nx-sep-b"></span>
            <div class="nx-cell w24"><svg width="22" height="22"><use href="#redbox"/></svg></div>
            <div class="nx-cell w6"><span class="nx-caret-sm"></span></div>
            <div class="nx-cell w24"><svg width="20" height="20"><use href="#line"/></svg></div>
            <div class="nx-cell w24"><svg width="20" height="20"><use href="#ring"/></svg></div>
            <div class="nx-cell w20"><svg width="18" height="18"><use href="#curve"/></svg></div>
            <div class="nx-cell w26"><svg width="18" height="18"><use href="#curve"/></svg></div>
            <div class="nx-cell w20"><svg width="20" height="20"><use href="#dots"/></svg></div>
            <span class="nx-sep-b ms-1"></span>
            <div class="nx-cell w30"><svg width="22" height="22"><use href="#dash"/></svg></div>
            <div class="nx-cell w6"><span class="nx-caret-sm"></span></div>
            <span class="nx-sep-b ms-1 me-1"></span>
            <div class="nx-cell w22"><svg width="22" height="22"><use href="#snap"/></svg></div>
            <div class="nx-cell w22"><svg width="22" height="22"><use href="#snap"/></svg></div>
            <div class="nx-cell w24"><svg width="20" height="20"><use href="#line"/></svg></div>
            <div class="nx-cell w24"><svg width="20" height="20"><use href="#mid"/></svg></div>
            <div class="nx-cell w22"><svg width="20" height="20"><use href="#curve"/></svg></div>
            <div class="nx-cell w22"><svg width="20" height="20"><use href="#cross3"/></svg></div>
            <div class="nx-cell w24"><svg width="20" height="20"><use href="#ring"/></svg></div>
            <div class="nx-cell w22"><svg width="20" height="20"><use href="#ring4"/></svg></div>
            <div class="nx-cell w24"><svg width="20" height="20"><use href="#plus"/></svg></div>
            <div class="nx-cell w22"><svg width="20" height="20"><use href="#mid"/></svg></div>
            <div class="nx-cell w24"><svg width="20" height="20"><use href="#face"/></svg></div>
            <span class="nx-sep-b ms-0"></span>
            <div class="nx-cell w28"><svg width="20" height="20"><use href="#cubeb"/></svg></div>
        </div>
        <div class="nx-bar4"><div class="nx-rule"></div></div>

        <!-- graphics window -->
        <div class="nx-view">
            <svg width="1062" height="645" viewBox="0 122 1062 645">
                <path fill="#5b7668" stroke="#3a4a42" stroke-width=".6" d="M492 122 884 341V488L492 272z"/>
                <path fill="#6a8a79" stroke="#3a4a42" stroke-width=".8" d="M883 341 1013 283V431L883 488z"/>
                <path fill="#a9e0c8" stroke="#3a4a42" stroke-width=".6" d="M492 122H724L1013 283 883 341z"/>
                <path fill="none" stroke="#3b5cff" stroke-width="1.6" d="M819 174 688 232V314"/>
                <path fill="url(#cylShade)" d="M480 384 633 317C645 308 655 307 665 307 675 307 682 310 687 313 720 335 742 370 745 412L793 437 531 552z"/>
                <path fill="none" stroke="#3a4a42" stroke-width=".8" d="M745 412 884 488"/>
                <ellipse cx="508" cy="475" rx="82" ry="50" transform="rotate(60 508 475)" fill="#5b7668" stroke="#2f3f37"/>
                <g fill="none" stroke-width="1">
                    <path stroke="#17a317" stroke-dasharray="2 1" d="M438 432 507 468"/>
                    <path stroke="#17a317" d="M508 437V468M463 442 470 445"/>
                    <path stroke="#c8c8c8" stroke-width="1.2" d="M508 468 556 447"/>
                    <path stroke="#c8c8c8" d="M464 444 478 437M541 437 556 447"/>
                </g>
                <path fill="#0f9e1d" d="M418 420 436 426 431 431z"/>
                <text x="410" y="423" fill="#17a317" font-size="12" font-family="Liberation Sans, sans-serif">Y</text>

                <!-- watermark logo -->
                <path fill="#1f5488" stroke="#b4babf" stroke-width="2" d="M803 664 846 688V737L803 761 761 737V688z"/>
                <path fill="#22789f" d="M821 674 846 688V737L803 761 781 749C800 752 832 745 838 722 841 708 833 690 821 674z"/>
                <path fill="none" stroke="#8fa9bd" stroke-width=".7" d="M772 681C795 676 815 690 825 700M761 722C768 705 775 700 782 700M783 725C788 740 795 752 806 760M825 725C835 728 840 725 846 715"/>
                <path fill="#1c4f85" d="M803 689 824 701 803 713 782 701zM782 701 803 713V737L782 725z"/>
                <path fill="#1f7ca2" d="M824 701V725L803 737V713z"/>
                <path fill="none" stroke="#b4babf" stroke-width="3" d="M803 687 825 700V725L803 737 782 725V700z"/>
                <path fill="none" stroke="#8fa9bd" stroke-width=".8" d="M782 700 803 712 825 700M803 712V737"/>
                <text class="nx-logo1" x="853" y="722" textLength="200" lengthAdjust="spacingAndGlyphs">3D世界网</text>
                <text class="nx-logo2" x="856" y="746" textLength="196" lengthAdjust="spacing">WWW.3DSJW.COM</text>
            </svg>
        </div>

        <!-- punch dialog -->
        <div class="nx-win position-absolute">
            <div class="nx-win-t d-flex align-items-center">
                <span class="me-auto">实体冲压</span>
                <svg width="16" height="16" class="me-1"><use href="#refresh"/></svg>
                <svg width="16" height="16"><use href="#gear"/></svg>
                <span class="nx-x d-flex align-items-center justify-content-center"><svg width="15" height="15"><use href="#close"/></svg></span>
            </div>
            <div class="nx-panel">
                <div class="nx-grp">
                    <div class="nx-g-h d-flex align-items-center justify-content-between"><span class="nx-g-l">类型</span><span class="nx-g-c"><svg width="9" height="11"><use href="#chev"/></svg></span></div>
                    <div class="nx-sel d-flex align-items-center gap-1">
                        <svg width="16" height="14"><use href="#punchr"/></svg><span>冲模</span>
                        <span class="nx-sel-b d-flex align-items-center justify-content-center"><span class="nx-caret"></span></span>
                    </div>
                </div>
                <div class="nx-grp">
                    <div class="nx-g-h d-flex align-items-center justify-content-between"><span class="nx-g-l">选择</span><span class="nx-g-c"><svg width="9" height="11"><use href="#chev"/></svg></span></div>
                    <div class="nx-row nx-h30 nx-pt6">
                        <div class="nx-fill d-flex align-items-center"><svg width="14" height="12"><use href="#ok"/></svg><span>目标面 (1)</span></div>
                        <button class="nx-ibtn"><svg width="22" height="22"><use href="#facebox"/></svg></button>
                    </div>
                    <div class="nx-row nx-h31">
                        <div class="nx-fill nx-hot d-flex align-items-center"><svg width="14" height="12"><use href="#ok"/></svg><span>工具体 (1)</span></div>
                        <button class="nx-ibtn"><svg width="22" height="24"><use href="#teey"/></svg></button>
                    </div>
                    <div class="nx-row nx-h32">
                        <span class="me-auto">从 CSYS</span>
                        <span class="nx-sbtn"><svg width="20" height="20"><use href="#csyss"/></svg></span>
                        <span class="nx-ddn d-flex align-items-center"><svg width="26" height="28"><use href="#csysl"/></svg><span class="nx-caret"></span></span>
                    </div>
                    <div class="nx-row nx-h32b">
                        <span class="me-auto">到 CSYS</span>
                        <span class="nx-sbtn"><svg width="20" height="20"><use href="#csyss"/></svg></span>
                        <span class="nx-ddn d-flex align-items-center"><svg width="26" height="28"><use href="#csysl"/></svg><span class="nx-caret"></span></span>
                    </div>
                    <div class="nx-row nx-h30b">
                        <span class="me-auto">冲裁面 (0)</span>
                        <button class="nx-ibtn"><svg width="22" height="24"><use href="#teeb"/></svg></button>
                    </div>
                </div>
                <div class="nx-grp">
                    <div class="nx-g-h d-flex align-items-center justify-content-between"><span class="nx-g-l">实体冲压属性</span><span class="nx-g-c"><svg width="9" height="11"><use href="#chev"/></svg></span></div>
                    <div class="nx-row nx-pt6">
                        <span>厚度</span>
                        <div class="input-group nx-inp"><div class="form-control">2.5</div><span class="input-group-text">mm</span><span class="nx-spin d-flex align-items-center justify-content-center"><svg width="12" height="14"><use href="#spin"/></svg></span></div>
                    </div>
                    <label class="nx-row nx-chk nx-mt2"><input class="form-check-input" type="checkbox"><span>自动判断厚度</span></label>
                    <label class="nx-row nx-chk"><input class="form-check-input" type="checkbox" checked><span>自动质心</span></label>
                    <label class="nx-row nx-chk nx-pb5"><input class="form-check-input" type="checkbox" checked><span>隐藏工具体</span></label>
                </div>
                <div class="nx-grp">
                    <div class="nx-g-h d-flex align-items-center justify-content-between"><span class="nx-g-l">倒圆</span><span class="nx-g-c"><svg width="9" height="11"><use href="#chev"/></svg></span></div>
                    <label class="nx-row nx-chk nx-pt5"><input class="form-check-input" type="checkbox" checked><span>实体冲压边倒圆</span></label>
                    <div class="nx-row">
                        <span>凹模半径</span>
                        <div class="input-group nx-inp"><div class="form-control">5</div><span class="input-group-text">mm</span><span class="nx-spin d-flex align-items-center justify-content-center"><svg width="12" height="14"><use href="#spin"/></svg></span></div>
                    </div>
                    <div class="nx-row nx-mt2">
                        <span>凸模半径</span>
                        <div class="input-group nx-inp"><div class="form-control">7.5</div><span class="input-group-text">mm</span><span class="nx-spin d-flex align-items-center justify-content-center"><svg width="12" height="14"><use href="#spin"/></svg></span></div>
                    </div>
                    <label class="nx-row nx-chk nx-mt1 nx-pb6"><input class="form-check-input" type="checkbox"><span>恒定厚度</span></label>
                </div>
                <div class="nx-grp">
                    <div class="nx-g-h d-flex align-items-center justify-content-between"><span class="nx-g-l">预览</span><span class="nx-g-c"><svg width="9" height="11"><use href="#chev"/></svg></span></div>
                    <div class="nx-row nx-h30 nx-pt6 nx-pt8">
                        <label class="nx-row nx-chk me-auto"><input class="form-check-input" type="checkbox" checked><span>预览</span></label>
                        <span class="me-1">显示结果</span>
                        <button class="nx-ibtn"><svg width="26" height="26"><use href="#lens"/></svg></button>
                    </div>
                </div>
                <div class="nx-foot d-flex justify-content-end">
                    <button class="btn nx-btn nx-def">&lt; 确定 &gt;</button>
                    <button class="btn nx-btn">应用</button>
                    <button class="btn nx-btn">取消</button>
                </div>
            </div>
        </div>

        <!-- error message -->
        <div class="nx-msg position-absolute">
            <div class="nx-msg-t">实体冲压</div>
            <div class="nx-msg-b">
                <div class="nx-msg-s d-flex align-items-start">
                    <svg width="32" height="32"><use href="#err"/></svg>
                    <span>实体冲压体无法构建。</span>
                </div>
                <button class="btn">确定(<u>O</u>)</button>
            </div>
        </div>
    </div>
</body>
</html>
